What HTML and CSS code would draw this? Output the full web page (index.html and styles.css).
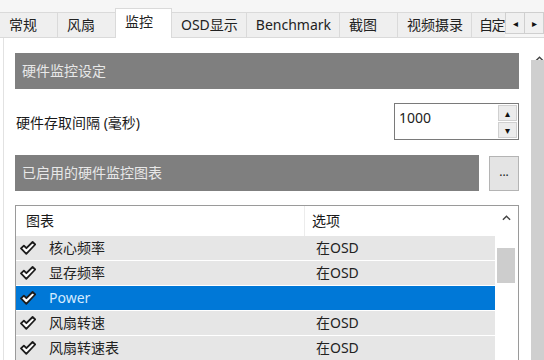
FILE: index.html
```html
<!DOCTYPE html>
<html lang="zh-CN">
<head>
  <meta charset="UTF-8">
  <title>监控</title>
  <link rel="stylesheet" href="styles.css">
</head>
<body>
  <div class="tabbar">
    <div class="tabs">
      <div class="tab">常规</div>
      <div class="tab">风扇</div>
      <div class="tab active">监控</div>
      <div class="tab">OSD显示</div>
      <div class="tab">Benchmark</div>
      <div class="tab">截图</div>
      <div class="tab">视频摄录</div>
      <div class="tab last">自定</div>
    </div>
    <div class="tab-arrows">
      <span class="arrow-btn">&#9666;</span>
      <span class="arrow-btn">&#9656;</span>
    </div>
  </div>

  <div class="main">
    <div class="panel">
      <div class="group-head">硬件监控设定</div>

      <div class="field-row">
        <span>硬件存取间隔 (毫秒)</span>
        <div class="spinner">
          <span class="spinner-value">1000</span>
          <div class="spin-btns">
            <span class="spin-btn">&#9652;</span>
            <span class="spin-btn">&#9662;</span>
          </div>
        </div>
      </div>

      <div class="group-row">
        <div class="group-head">已启用的硬件监控图表</div>
        <button class="more-btn">...</button>
      </div>

      <div class="list">
        <div class="list-body">
          <div class="list-head">
            <span class="col-name">图表</span>
            <span class="col-opt">选项</span>
          </div>
          <div class="row">
            <span class="col-name"><svg class="check" viewBox="0 0 16 14"><path d="M1 7.4 L3.9 4.6 L6.4 7.2 L12.6 1 L15.2 3.5 L6.3 12.8 Z"/></svg>核心频率</span>
            <span class="col-opt">在OSD</span>
          </div>
          <div class="row">
            <span class="col-name"><svg class="check" viewBox="0 0 16 14"><path d="M1 7.4 L3.9 4.6 L6.4 7.2 L12.6 1 L15.2 3.5 L6.3 12.8 Z"/></svg>显存频率</span>
            <span class="col-opt">在OSD</span>
          </div>
          <div class="row selected">
            <span class="col-name"><svg class="check" viewBox="0 0 16 14"><path d="M1 7.4 L3.9 4.6 L6.4 7.2 L12.6 1 L15.2 3.5 L6.3 12.8 Z"/></svg>Power</span>
            <span class="col-opt"></span>
          </div>
          <div class="row">
            <span class="col-name"><svg class="check" viewBox="0 0 16 14"><path d="M1 7.4 L3.9 4.6 L6.4 7.2 L12.6 1 L15.2 3.5 L6.3 12.8 Z"/></svg>风扇转速</span>
            <span class="col-opt">在OSD</span>
          </div>
          <div class="row">
            <span class="col-name"><svg class="check" viewBox="0 0 16 14"><path d="M1 7.4 L3.9 4.6 L6.4 7.2 L12.6 1 L15.2 3.5 L6.3 12.8 Z"/></svg>风扇转速表</span>
            <span class="col-opt">在OSD</span>
          </div>
        </div>
        <div class="list-scroll">
          <svg class="chevron" viewBox="0 0 10 6"><polyline points="1,5 5,1 9,5"/></svg>
          <div class="list-thumb"></div>
        </div>
      </div>
    </div>

    <div class="vscroll">
      <div class="vscroll-up">
        <svg class="chevron" viewBox="0 0 10 6"><polyline points="1,5 5,1 9,5"/></svg>
      </div>
      <div class="vscroll-thumb"></div>
    </div>
  </div>
</body>
</html>
```

FILE: styles.css
```css
body {
  margin: 0;
  width: 544px;
  height: 360px;
  overflow: hidden;
  background: #fff;
  font-family: "Noto Sans", "Noto Sans CJK SC", sans-serif;
  font-size: 14px;
  color: #1a1a1a;
}

/* tab strip */
.tabbar {
  display: flex;
  height: 38px;
  background: #f6f6f6;
}

.tabs {
  flex: 1;
  display: flex;
  align-items: flex-end;
  overflow: hidden;
  white-space: nowrap;
}

.tab {
  flex: 0 0 auto;
  box-sizing: border-box;
  min-width: 58px;
  height: 26px;
  padding: 0 8px 0 9px;
  line-height: 23px;
  background: #efefef;
  border: 1px solid #dadada;
  border-left: none;
  color: #222;
}

.tab.active {
  min-width: 57px;
  height: 30px;
  line-height: 26px;
  background: #fff;
  border-bottom: none;
  border-left: 1px solid #dadada;
  margin-left: -1px;
}

.tab.last {
  min-width: 0;
  flex: 1;
  padding: 0 0 0 7px;
  letter-spacing: -1.5px;
  border-right: none;
}

.tab-arrows {
  display: flex;
  align-items: flex-start;
  padding-top: 12px;
  border-bottom: 1px solid #dadada;
  height: 25px;
  background: #f6f6f6;
}

.arrow-btn {
  box-sizing: border-box;
  width: 20px;
  height: 22px;
  line-height: 21px;
  text-align: center;
  font-size: 10px;
  background: #f0f0f0;
  border: 1px solid #cfcfcf;
  color: #111;
}

.arrow-btn + .arrow-btn {
  border-left: none;
  width: 19px;
}

/* page body */
.main {
  display: flex;
  height: 322px;
}

.panel {
  flex: 1;
  margin-left: 3px;
  border-left: 1px solid #e2e2e2;
  padding: 15px 12px 0 11px;
  overflow: hidden;
}

.group-head {
  height: 36px;
  line-height: 35px;
  padding-left: 7px;
  background: #7f7f7f;
  color: #e8e8e8;
}

.field-row {
  display: flex;
  align-items: center;
  justify-content: space-between;
  margin-top: 14px;
  padding-left: 1px;
}

.spinner {
  box-sizing: border-box;
  display: flex;
  width: 125px;
  height: 37px;
  border: 1px solid #7a7a7a;
  background: #fff;
}

.spinner-value {
  flex: 1;
  padding: 4px 0 0 4px;
  line-height: 20px;
  color: #222;
}

.spin-btns {
  display: flex;
  flex-direction: column;
  gap: 1px;
  padding: 1px;
}

.spin-btn {
  box-sizing: border-box;
  width: 19px;
  height: 16px;
  line-height: 14px;
  text-align: center;
  font-size: 10px;
  background: #ececec;
  border: 1px solid #d0d0d0;
  color: #111;
}

.group-row {
  display: flex;
  align-items: center;
  gap: 10px;
  margin-top: 15px;
}

.group-row .group-head {
  flex: 1;
}

.more-btn {
  width: 30px;
  height: 35px;
  padding: 0 0 4px;
  background: #e4e4e4;
  border: 1px solid #b4b4b4;
  font-family: inherit;
  font-size: 12px;
  color: #222;
}

/* chart list */
.list {
  display: flex;
  margin-top: 14px;
  height: 170px;
  border: 1px solid #9a9a9a;
  border-bottom: none;
}

.list-body {
  flex: 1;
}

.list-head {
  display: flex;
  height: 30px;
  line-height: 30px;
  background: #fff;
}

.list-head .col-name {
  padding-left: 10px;
  border-right: 1px solid #ececec;
}

.list-head .col-opt {
  padding-left: 7px;
}

.col-name {
  box-sizing: border-box;
  width: 289px;
  display: flex;
  align-items: center;
}

.row {
  display: flex;
  height: 24px;
  line-height: 24px;
  border-bottom: 1px solid #fff;
  background: #e6e6e6;
  color: #222;
}

.row .col-name {
  padding-left: 4px;
}

.row .col-opt {
  padding-left: 11px;
}

.row.selected {
  background: #0078d7;
  color: #d4ebff;
}

.check {
  width: 16px;
  height: 14px;
  margin-right: 13px;
}

.check path {
  fill: #fff;
  stroke: #1c1c1c;
  stroke-width: 1.8;
  stroke-linejoin: round;
}

.list-scroll {
  display: flex;
  flex-direction: column;
  align-items: center;
  width: 23px;
  background: #fff;
}

.list-scroll .chevron {
  margin-top: 9px;
}

.chevron {
  width: 9px;
  height: 6px;
}

.chevron polyline {
  fill: none;
  stroke: #444;
  stroke-width: 1.6;
}

.list-thumb {
  width: 18px;
  height: 35px;
  margin-top: 27px;
  margin-left: -1px;
  background: #cdcdcd;
}

/* outer scrollbar */
.vscroll {
  display: flex;
  flex-direction: column;
  width: 13px;
}

.vscroll-up {
  height: 22px;
  padding: 9px 0 0 4px;
  box-sizing: border-box;
  background: #fff;
}

.vscroll-thumb {
  flex: 1;
  background: #cfcfcf;
}
```
